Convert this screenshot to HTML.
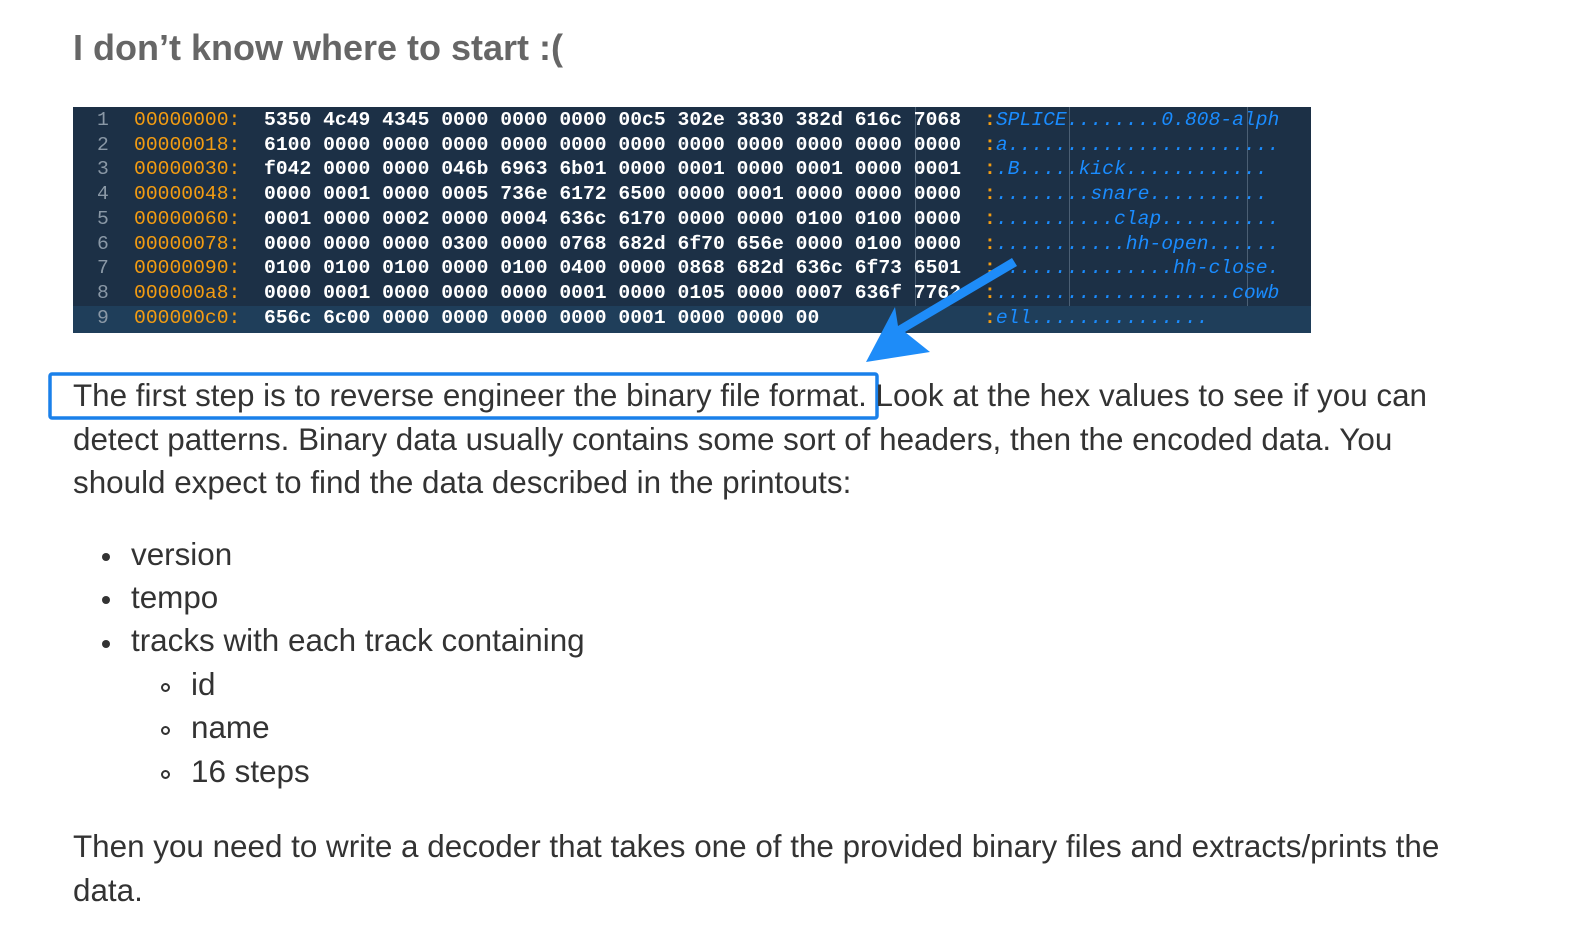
<!DOCTYPE html>
<html><head><meta charset="utf-8"><style>
body{margin:0;background:#fff;width:1588px;height:952px;position:relative;overflow:hidden;font-family:"Liberation Sans",Arial,sans-serif;}
h1{position:absolute;left:73px;top:27px;margin:0;font-size:36px;font-weight:bold;color:#666;}
.code{position:absolute;left:73px;top:107px;width:1238px;height:226px;background:#1c3046;}
.row{position:absolute;left:0;width:1238px;height:24.7px;font-family:"Liberation Mono",monospace;font-size:19.7px;line-height:24.7px;white-space:pre;font-weight:bold}
.ln{position:absolute;left:24px;color:#8a98a6;font-weight:normal}
.ad{position:absolute;left:61px;color:#f39c12;font-weight:normal}
.hx{position:absolute;left:191px;color:#fff}
.as{position:absolute;left:911px;color:#1a8cff;font-style:italic;font-weight:normal}
.as b{color:#f39c12;font-style:normal;font-weight:bold}
.vl{position:absolute;top:0;height:226px;width:1px;background:#4b5f74}
p{position:absolute;left:73px;margin:0;font-size:31.4px;color:#333;line-height:43.5px;width:1400px}
.li{position:absolute;font-size:31.4px;color:#333}
.dot{position:absolute;width:8px;height:8px;border-radius:50%;background:#333}
.circ{position:absolute;width:9px;height:9px;border-radius:50%;border:2px solid #333;box-sizing:border-box}
</style></head><body>
<h1>I don’t know where to start :(</h1>
<div class="code">
<div class="vl" style="left:842px"></div><div class="vl" style="left:996px"></div><div class="vl" style="left:1174px"></div>
<div class="row" style="top:1px"><span class="ln">1</span><span class="ad">00000000:</span><span class="hx">5350 4c49 4345 0000 0000 0000 00c5 302e 3830 382d 616c 7068</span><span class="as"><b>:</b>SPLICE........0.808-alph</span></div>
<div class="row" style="top:25.7px"><span class="ln">2</span><span class="ad">00000018:</span><span class="hx">6100 0000 0000 0000 0000 0000 0000 0000 0000 0000 0000 0000</span><span class="as"><b>:</b>a.......................</span></div>
<div class="row" style="top:50.4px"><span class="ln">3</span><span class="ad">00000030:</span><span class="hx">f042 0000 0000 046b 6963 6b01 0000 0001 0000 0001 0000 0001</span><span class="as"><b>:</b>.B.....kick............</span></div>
<div class="row" style="top:75.1px"><span class="ln">4</span><span class="ad">00000048:</span><span class="hx">0000 0001 0000 0005 736e 6172 6500 0000 0001 0000 0000 0000</span><span class="as"><b>:</b>........snare..........</span></div>
<div class="row" style="top:99.8px"><span class="ln">5</span><span class="ad">00000060:</span><span class="hx">0001 0000 0002 0000 0004 636c 6170 0000 0000 0100 0100 0000</span><span class="as"><b>:</b>..........clap..........</span></div>
<div class="row" style="top:124.5px"><span class="ln">6</span><span class="ad">00000078:</span><span class="hx">0000 0000 0000 0300 0000 0768 682d 6f70 656e 0000 0100 0000</span><span class="as"><b>:</b>...........hh-open......</span></div>
<div class="row" style="top:149.2px"><span class="ln">7</span><span class="ad">00000090:</span><span class="hx">0100 0100 0100 0000 0100 0400 0000 0868 682d 636c 6f73 6501</span><span class="as"><b>:</b>...............hh-close.</span></div>
<div class="row" style="top:173.9px"><span class="ln">8</span><span class="ad">000000a8:</span><span class="hx">0000 0001 0000 0000 0000 0001 0000 0105 0000 0007 636f 7762</span><span class="as"><b>:</b>....................cowb</span></div>
<div class="row" style="top:198.6px;background:#1f3e5a;height:27px"><span class="ln">9</span><span class="ad">000000c0:</span><span class="hx">656c 6c00 0000 0000 0000 0000 0001 0000 0000 00</span><span class="as"><b>:</b>ell...............</span></div>
</div>
<svg style="position:absolute;left:0;top:0" width="1588" height="952">
<path d="M1017 266 L905 332 L930 352 L866 362 L895 307 L898 326 L1012 258 Z" fill="#1e8cf8"/>
<rect x="50" y="374" width="827" height="44" fill="none" stroke="#1a80ea" stroke-width="3.5" rx="2"/>
</svg>
<p style="top:374px">The first step is to reverse engineer the binary file format. Look at the hex values to see if you can detect patterns. Binary data usually contains some sort of headers, then the encoded data. You should expect to find the data described in the printouts:</p>
<div class="dot" style="left:102px;top:553px"></div><div class="li" style="left:131px;top:537px">version</div>
<div class="dot" style="left:102px;top:596px"></div><div class="li" style="left:131px;top:580px">tempo</div>
<div class="dot" style="left:102px;top:640px"></div><div class="li" style="left:131px;top:623px">tracks with each track containing</div>
<div class="circ" style="left:161px;top:683px"></div><div class="li" style="left:191px;top:667px">id</div>
<div class="circ" style="left:161px;top:726px"></div><div class="li" style="left:191px;top:710px">name</div>
<div class="circ" style="left:161px;top:770px"></div><div class="li" style="left:191px;top:754px">16 steps</div>
<p style="top:825px">Then you need to write a decoder that takes one of the provided binary files and extracts/prints the data.</p>
</body></html>
